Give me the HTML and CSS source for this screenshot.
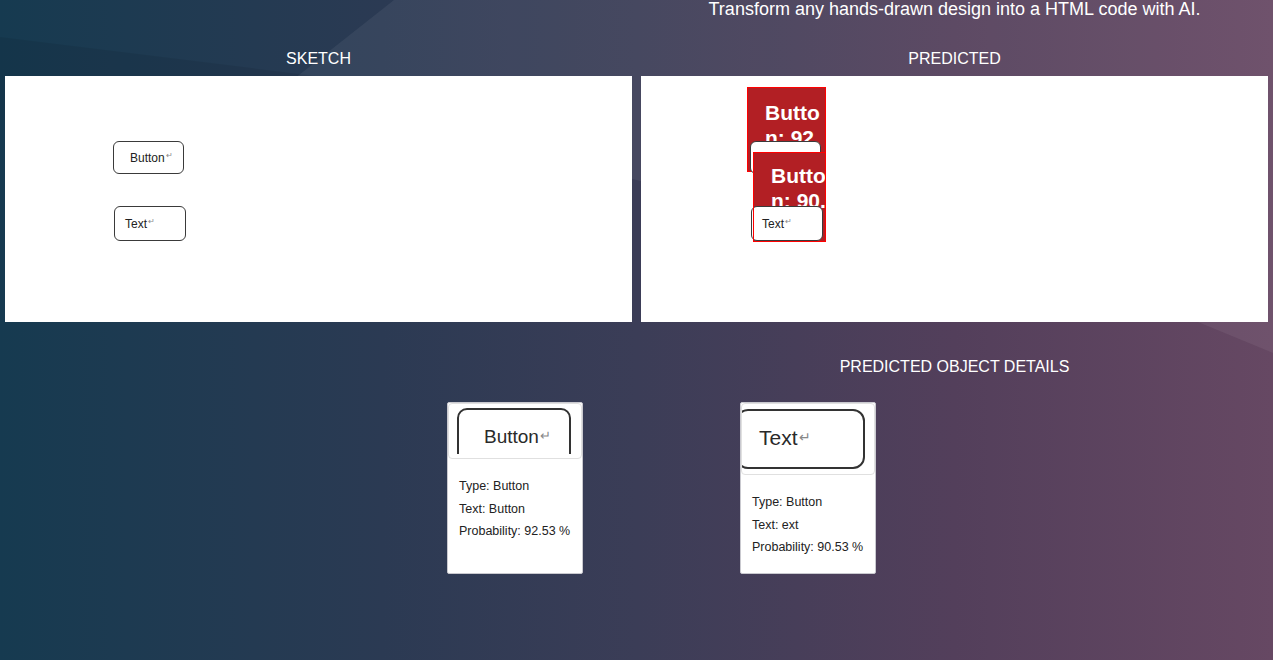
FILE: index.html
```html
<!DOCTYPE html>
<html lang="en">
<head>
<meta charset="utf-8">
<title>Sketch to HTML</title>
<link rel="stylesheet" href="styles.css">
</head>
<body>
<svg class="bg-shapes" width="1273" height="660" viewBox="0 0 1273 660" aria-hidden="true">
  <polygon points="0,37 340,79 340,120 0,120" fill="#000" fill-opacity="0.07"/>
  <polygon points="394,0 1273,0 1273,353 1198,322 280,90" fill="#fff" fill-opacity="0.06"/>
</svg>
<main class="page">
  <section class="top">
    <div class="spacer"></div>
    <p class="tagline">Transform any hands-drawn design into a HTML code with AI.</p>
    <h2 class="col-title">SKETCH</h2>
    <h2 class="col-title">PREDICTED</h2>
    <div class="panel">
      <div class="sk sk-button sk-b1"><span>Button</span><i>↵</i></div>
      <div class="sk sk-text sk-t1"><span>Text</span><i>↵</i></div>
    </div>
    <div class="panel">
      <div class="box box-1"><span>Button: 92.53%</span></div>
      <div class="sk sk-button sk-b2"></div>
      <div class="box box-2"><span>Button: 90.53%</span></div>
      <div class="sk sk-text sk-t2"><span>Text</span><i>↵</i></div>
      <div class="box-outline box-2o"></div>
    </div>
    <div class="spacer"></div>
    <h2 class="col-title details-title">PREDICTED OBJECT DETAILS</h2>
  </section>
  <section class="cards">
    <article class="card">
      <div class="thumb thumb-1">
        <div class="crop">
          <div class="crop-box crop-box-1"><span>Button</span><i>↵</i></div>
        </div>
      </div>
      <div class="card-body">
        <p>Type: Button</p>
        <p>Text: Button</p>
        <p>Probability: 92.53 %</p>
      </div>
    </article>
    <article class="card">
      <div class="thumb thumb-2">
        <div class="crop">
          <div class="crop-box crop-box-2"><span>Text</span><i>↵</i></div>
        </div>
      </div>
      <div class="card-body">
        <p>Type: Button</p>
        <p>Text: ext</p>
        <p>Probability: 90.53 %</p>
      </div>
    </article>
  </section>
</main>
</body>
</html>
```
FILE: styles.css
```css
* { box-sizing: border-box; }

html, body {
  margin: 0;
  padding: 0;
}

body {
  width: 1273px;
  height: 660px;
  overflow: hidden;
  position: relative;
  font-family: "Liberation Sans", Arial, sans-serif;
  color: #fff;
  background: linear-gradient(90deg, #163a50 0%, #2b3a53 30%, #3b3d57 50%, #533f5b 75%, #664863 100%);
}

.bg-shapes {
  position: absolute;
  left: 0;
  top: 0;
  z-index: 0;
}

.page {
  position: relative;
  z-index: 1;
}

.top {
  display: grid;
  grid-template-columns: 627px 627px;
  column-gap: 9px;
  padding: 0 5px;
}

.tagline {
  margin: -1px 0 0;
  font-size: 18px;
  line-height: 20px;
  text-align: center;
}

.col-title {
  margin: 31px 0 8px;
  font-size: 16px;
  line-height: 18px;
  font-weight: normal;
  text-align: center;
}

.details-title {
  margin: 36px 0 0;
}

.panel {
  position: relative;
  height: 246px;
  background: #fff;
  overflow: hidden;
  color: #222;
}

/* sketch elements */
.sk {
  position: absolute;
  background: #fff;
  border: 1px solid #3a3a3a;
  border-radius: 6px;
  display: flex;
  align-items: center;
  font-size: 12px;
  color: #222;
}

.sk i, .crop-box i {
  font-style: normal;
  color: #888;
  font-size: 8px;
  position: relative;
  top: -2px;
  margin-left: 1px;
}

.sk-button { width: 71px; height: 33px; padding-left: 16px; }
.sk-text { width: 72px; height: 35px; padding-left: 10px; }

.sk-b1 { left: 108px; top: 65px; }
.sk-t1 { left: 109px; top: 130px; }
.sk-b2 { left: 109px; top: 65px; }
.sk-t2 { left: 110px; top: 130px; }

/* predicted boxes */
.box {
  position: absolute;
  background: #b21f24;
  border: 1px solid #f00;
  overflow: hidden;
  padding: 12px 0 0 17px;
  color: #fff;
  font-weight: bold;
  font-size: 21px;
  line-height: 25px;
}

.box span {
  display: block;
  width: 60px;
  word-break: break-all;
}

.box-1 { left: 106px; top: 11px; width: 79px; height: 85px; }
.box-2 { left: 112px; top: 76px; width: 73px; height: 90px; padding-top: 10px; }

.box-outline {
  position: absolute;
  border: 1px solid #f00;
}

.box-2o { left: 112px; top: 76px; width: 73px; height: 90px; }

/* cards */
.cards {
  display: flex;
  gap: 157px;
  padding-left: 447px;
  margin-top: 26px;
}

.card {
  width: 136px;
  height: 172px;
  background: #fff;
  border: 1px solid #c9c9cf;
  border-radius: 2px;
  color: #222;
}

.thumb {
  border: 1px solid #e0e0e0;
  border-radius: 4px;
  overflow: hidden;
  background: #fff;
}

.thumb-1 { height: 56px; }
.thumb-2 { height: 72px; }

.crop {
  overflow: hidden;
}

.thumb-1 .crop { height: 50px; }
.thumb-2 .crop { height: 66px; }

.crop-box {
  border: 2px solid #333;
  background: #fff;
  color: #2a2a2a;
  display: flex;
}

.crop-box-1 {
  margin: 4px 0 0 8px;
  width: 114px;
  height: 70px;
  border-radius: 10px;
  padding: 16px 0 0 25px;
  font-size: 19px;
  line-height: 22px;
}

.crop-box-1 i { font-size: 13px; top: -1px; }

.crop-box-2 {
  margin: 5px 0 0 -6px;
  width: 129px;
  height: 60px;
  border-radius: 12px;
  padding: 15px 0 0 21px;
  font-size: 21px;
  line-height: 24px;
}

.crop-box-2 i { font-size: 14px; top: -1px; }

.card-body {
  padding: 16px 11px 0;
  font-size: 12.5px;
  line-height: 22.5px;
}

.card-body p {
  margin: 0;
  white-space: nowrap;
}
```
